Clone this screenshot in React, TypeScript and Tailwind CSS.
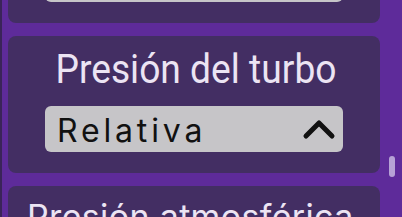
import React from "react";

function Chevron() {
  return (
    <svg width="36" height="22" viewBox="0 0 36 22" className="shrink-0">
      <path d="M5 18 L18 5 L31 18" fill="none" stroke="#111111" strokeWidth="5" strokeLinecap="round" strokeLinejoin="round" />
    </svg>
  );
}

function Card({ title, value }: { title: string; value: string }) {
  return (
    <div className="mx-[8px] w-[372px] rounded-[8px] bg-[#432e63] px-[37px] pt-[12px] pb-[21px]">
      <div className="h-[44px] scale-x-[0.93] text-center text-[40px] leading-[44px] text-[#ece4f3] whitespace-nowrap" style={{ fontFamily: "Roboto, sans-serif" }}>
        {title}
      </div>
      <div className="mt-[14px] flex h-[46px] items-center justify-between rounded-[6px] bg-[#c6c5c8] pl-[12px] pr-[6px]">
        <span className="pt-[4px] text-[32px] leading-none tracking-[0.12em] text-[#111111]" style={{ fontFamily: "Inter, sans-serif" }}>
          {value}
        </span>
        <Chevron />
      </div>
    </div>
  );
}

export default function App() {
  return (
    <div className="relative h-[217px] w-[402px] overflow-hidden bg-[#5e2b9a] border-l-[2px] border-[#3a2459]">
      <div className="-ml-[2px] mt-[-114px] flex flex-col gap-[13px]">
        <Card title="Unidades" value="Métricas" />
        <Card title="Presión del turbo" value="Relativa" />
        <div className="mx-[8px] h-[80px] w-[372px] rounded-[8px] bg-[#432e63] pl-[19px] pt-[11px]">
          <div className="text-[34px] leading-[40px] tracking-[0.01em] text-[#ece4f3] whitespace-nowrap" style={{ fontFamily: "Inter, sans-serif" }}>
            Presión atmosférica
          </div>
        </div>
      </div>
      <div className="absolute left-[387px] top-[156px] h-[21px] w-[6px] rounded-full bg-[#b7a2d6]" />
    </div>
  );
}
